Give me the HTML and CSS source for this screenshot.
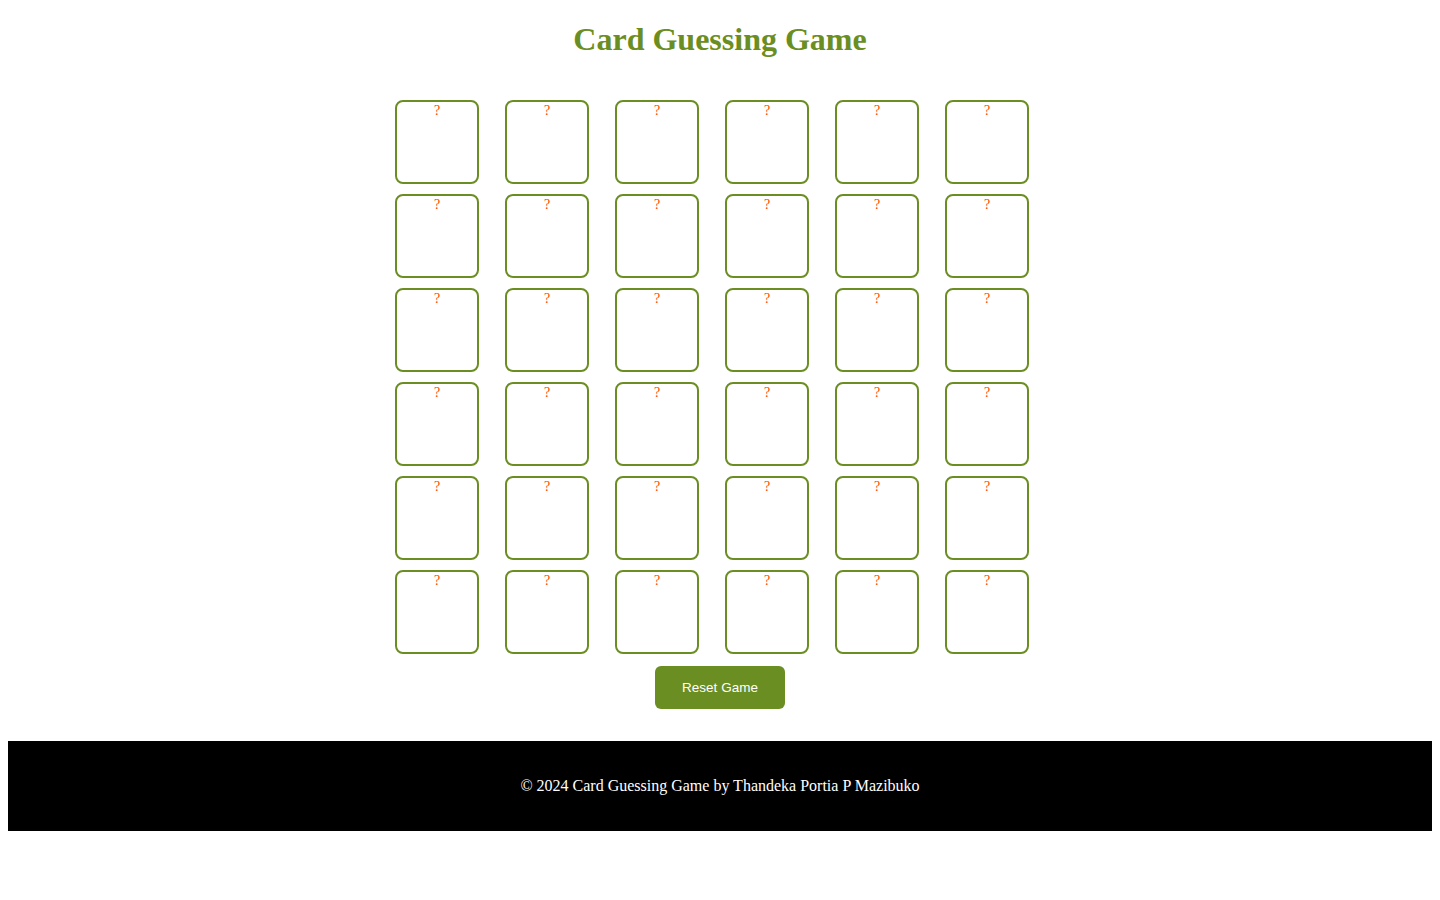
FILE: index.html
```html
<!DOCTYPE html>
<html lang="en">
<head>
<meta charset="utf-8">
<title>Card Guessing Game</title>
<link rel="stylesheet" href="styles.css">
</head>
<body>
<h1 class="title">Card Guessing Game</h1>
<main class="game">
  <div class="board">
    <div class="card">?</div><div class="card">?</div><div class="card">?</div><div class="card">?</div><div class="card">?</div><div class="card">?</div>
    <div class="card">?</div><div class="card">?</div><div class="card">?</div><div class="card">?</div><div class="card">?</div><div class="card">?</div>
    <div class="card">?</div><div class="card">?</div><div class="card">?</div><div class="card">?</div><div class="card">?</div><div class="card">?</div>
    <div class="card">?</div><div class="card">?</div><div class="card">?</div><div class="card">?</div><div class="card">?</div><div class="card">?</div>
    <div class="card">?</div><div class="card">?</div><div class="card">?</div><div class="card">?</div><div class="card">?</div><div class="card">?</div>
    <div class="card">?</div><div class="card">?</div><div class="card">?</div><div class="card">?</div><div class="card">?</div><div class="card">?</div>
  </div>
  <button class="reset">Reset Game</button>
</main>
<footer class="footer">
  <p>&copy; 2024 Card Guessing Game by Thandeka Portia P Mazibuko</p>
</footer>
</body>
</html>
```
FILE: styles.css
```css
body {
  margin: 8px;
  font-family: "Liberation Serif", "Times New Roman", serif;
  background: #fff;
}
.title {
  font-size: 32px;
  margin: 13.44px 0 21.44px;
  text-align: center;
  color: #6b8e23;
  font-weight: bold;
}
.game {
  padding: 20px 0 32px;
  display: flex;
  flex-direction: column;
  align-items: center;
}
.board {
  display: grid;
  grid-template-columns: repeat(6, 100px);
  gap: 10px;
  justify-content: center;
}
.card {
  width: 80px;
  height: 80px;
  border: 2px solid #6b8e23;
  border-radius: 8px;
  text-align: center;
  color: #ff4500;
  font-size: 14px;
  line-height: 17px;
  box-sizing: content-box;
}
.reset {
  margin-top: 12px;
  width: 130px;
  height: 43px;
  background: #6b8e23;
  color: #fff;
  border: none;
  border-radius: 6px;
  font-family: "Liberation Sans", Arial, sans-serif;
  font-size: 13.5px;
  cursor: pointer;
}
.footer {
  background: #000;
  color: #fff;
  text-align: center;
  padding: 20px;
  font-size: 16px;
}
.footer p {
  margin: 16px 0;
}
```
